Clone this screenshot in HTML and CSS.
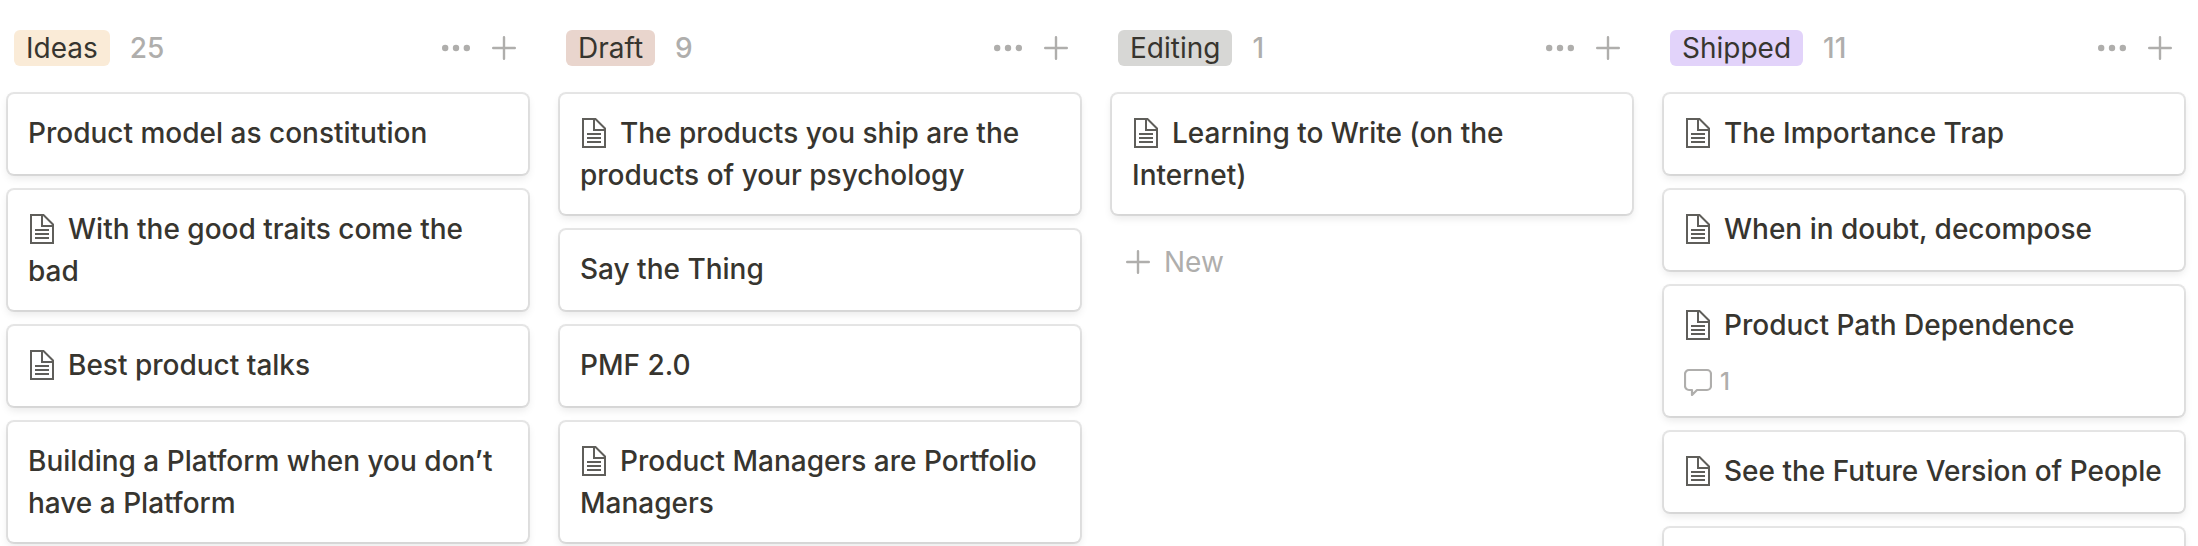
FILE: index.html
```
<!DOCTYPE html>
<html lang="en">
<head>
  <meta charset="UTF-8">
  <meta name="viewport" content="width=device-width, initial-scale=1">
  <title>Writing board</title>
  <link rel="stylesheet" href="styles.css">
</head>
<body>
  <!-- shared icons -->
  <svg class="sprite" aria-hidden="true">
    <symbol id="page" viewBox="0 0 24 30">
      <path fill="none" stroke="currentColor" stroke-width="2" d="M1 1h12.500L23 10.500V29H1z M12 1v11H23"/>
      <path fill="none" stroke="currentColor" stroke-width="2" d="M5 16h14M5 20h14M5 24h14"/>
    </symbol>
    <symbol id="dots" viewBox="0 0 28 8">
      <circle cx="3.200" cy="4" r="3.200"/><circle cx="14" cy="4" r="3.200"/><circle cx="24.800" cy="4" r="3.200"/>
    </symbol>
    <symbol id="plus" viewBox="0 0 24 24">
      <path fill="none" stroke="currentColor" stroke-width="2.400" stroke-linecap="round" d="M12 1.200v21.600M1.200 12h21.600"/>
    </symbol>
    <symbol id="comment" viewBox="0 0 28 28">
      <path fill="none" stroke="currentColor" stroke-width="2.200" stroke-linejoin="round" d="M5 2h18a4 4 0 0 1 4 4v12a4 4 0 0 1-4 4H13l-5 5v-5H5a4 4 0 0 1-4-4V6a4 4 0 0 1 4-4z"/>
    </symbol>
  </svg>

  <main class="board">
    <section class="column">
      <header class="column-header">
        <h2 class="tag tag-ideas">Ideas</h2>
        <span class="count">25</span>
        <button class="icon-button" aria-label="More"><svg class="dots"><use href="#dots"/></svg></button>
        <button class="icon-button" aria-label="Add"><svg class="plus"><use href="#plus"/></svg></button>
      </header>
      <a class="card" href="#">Product model as constitution</a>
      <a class="card" href="#"><svg class="page"><use href="#page"/></svg>With the good traits come the bad</a>
      <a class="card" href="#"><svg class="page"><use href="#page"/></svg>Best product talks</a>
      <a class="card" href="#">Building a Platform when you don’t have a Platform</a>
    </section>

    <section class="column">
      <header class="column-header">
        <h2 class="tag tag-draft">Draft</h2>
        <span class="count">9</span>
        <button class="icon-button" aria-label="More"><svg class="dots"><use href="#dots"/></svg></button>
        <button class="icon-button" aria-label="Add"><svg class="plus"><use href="#plus"/></svg></button>
      </header>
      <a class="card" href="#"><svg class="page"><use href="#page"/></svg>The products you ship are the products of your psychology</a>
      <a class="card" href="#">Say the Thing</a>
      <a class="card" href="#">PMF 2.0</a>
      <a class="card" href="#"><svg class="page"><use href="#page"/></svg>Product Managers are Portfolio Managers</a>
    </section>

    <section class="column">
      <header class="column-header">
        <h2 class="tag tag-editing">Editing</h2>
        <span class="count">1</span>
        <button class="icon-button" aria-label="More"><svg class="dots"><use href="#dots"/></svg></button>
        <button class="icon-button" aria-label="Add"><svg class="plus"><use href="#plus"/></svg></button>
      </header>
      <a class="card" href="#"><svg class="page"><use href="#page"/></svg>Learning to Write (on the Internet)</a>
      <button class="new-button"><svg class="plus"><use href="#plus"/></svg>New</button>
    </section>

    <section class="column">
      <header class="column-header">
        <h2 class="tag tag-shipped">Shipped</h2>
        <span class="count">11</span>
        <button class="icon-button" aria-label="More"><svg class="dots"><use href="#dots"/></svg></button>
        <button class="icon-button" aria-label="Add"><svg class="plus"><use href="#plus"/></svg></button>
      </header>
      <a class="card" href="#"><svg class="page"><use href="#page"/></svg>The Importance Trap</a>
      <a class="card" href="#"><svg class="page"><use href="#page"/></svg>When in doubt, decompose</a>
      <a class="card" href="#"><svg class="page"><use href="#page"/></svg>Product Path Dependence
        <span class="comments"><svg class="comment"><use href="#comment"/></svg>1</span>
      </a>
      <a class="card" href="#"><svg class="page"><use href="#page"/></svg>See the Future Version of People</a>
      <a class="card" href="#" aria-label="Untitled"></a>
    </section>
  </main>
</body>
</html>
```
FILE: styles.css
```
* {
  box-sizing: border-box;
}
body {
  margin: 0;
  height: 100vh;
  overflow: hidden;
  background: #fff;
  color: #37352f;
  font-family: Inter, "Liberation Sans", sans-serif;
  font-size: 28px;
  line-height: 42px;
}
.sprite {
  display: none;
}
.board {
  display: grid;
  grid-template-columns: repeat(4, 1fr);
  gap: 32px;
  padding: 16px 14px 0 8px;
}
.column {
  display: flex;
  flex-direction: column;
  gap: 16px;
  min-width: 0;
}
.column-header {
  display: flex;
  align-items: center;
  height: 64px;
  margin-bottom: -2px;
  padding: 0 0 0 6px;
}

.tag {
  margin: 0;
  padding: 0 12px;
  border-radius: 6px;
  font-size: 28px;
  font-weight: 400;
  line-height: 36px;
}
.tag-ideas { background: #faebd7; }
.tag-draft { background: #e9d5cd; }
.tag-editing { background: #d7d7d5; }
.tag-shipped { background: #e2d3fa; }

.count {
  margin: 0 auto 0 20px;
  color: #afaeac;
  font-weight: 500;
}
.icon-button {
  display: flex;
  align-items: center;
  justify-content: center;
  width: 48px;
  height: 48px;
  padding: 0;
  border: none;
  background: none;
  color: #afaeac;
  cursor: pointer;
}
.dots {
  width: 28px;
  height: 8px;
  fill: currentColor;
}
.plus {
  width: 24px;
  height: 24px;
}

.card {
  min-height: 80px;
  padding: 18px 20px;
  border-radius: 6px;
  box-shadow: 0 0 0 2px rgba(15, 15, 15, 0.1), 0 4px 8px rgba(15, 15, 15, 0.1);
  background: #fff;
  color: inherit;
  font-weight: 500;
  text-decoration: none;
}
.page {
  width: 24px;
  height: 30px;
  margin: 0 14px 0 2px;
  color: #5f5e5a;
  vertical-align: -5px;
}
.comments {
  display: flex;
  align-items: center;
  gap: 8px;
  margin-top: 20px;
  color: #afaeac;
  font-size: 24px;
  font-weight: 500;
  line-height: 32px;
}
.comment {
  width: 28px;
  height: 28px;
}

.new-button {
  display: flex;
  align-items: center;
  gap: 14px;
  height: 64px;
  padding: 0 12px 0 14px;
  border: none;
  background: none;
  color: #afaeac;
  font: inherit;
  cursor: pointer;
}
```
